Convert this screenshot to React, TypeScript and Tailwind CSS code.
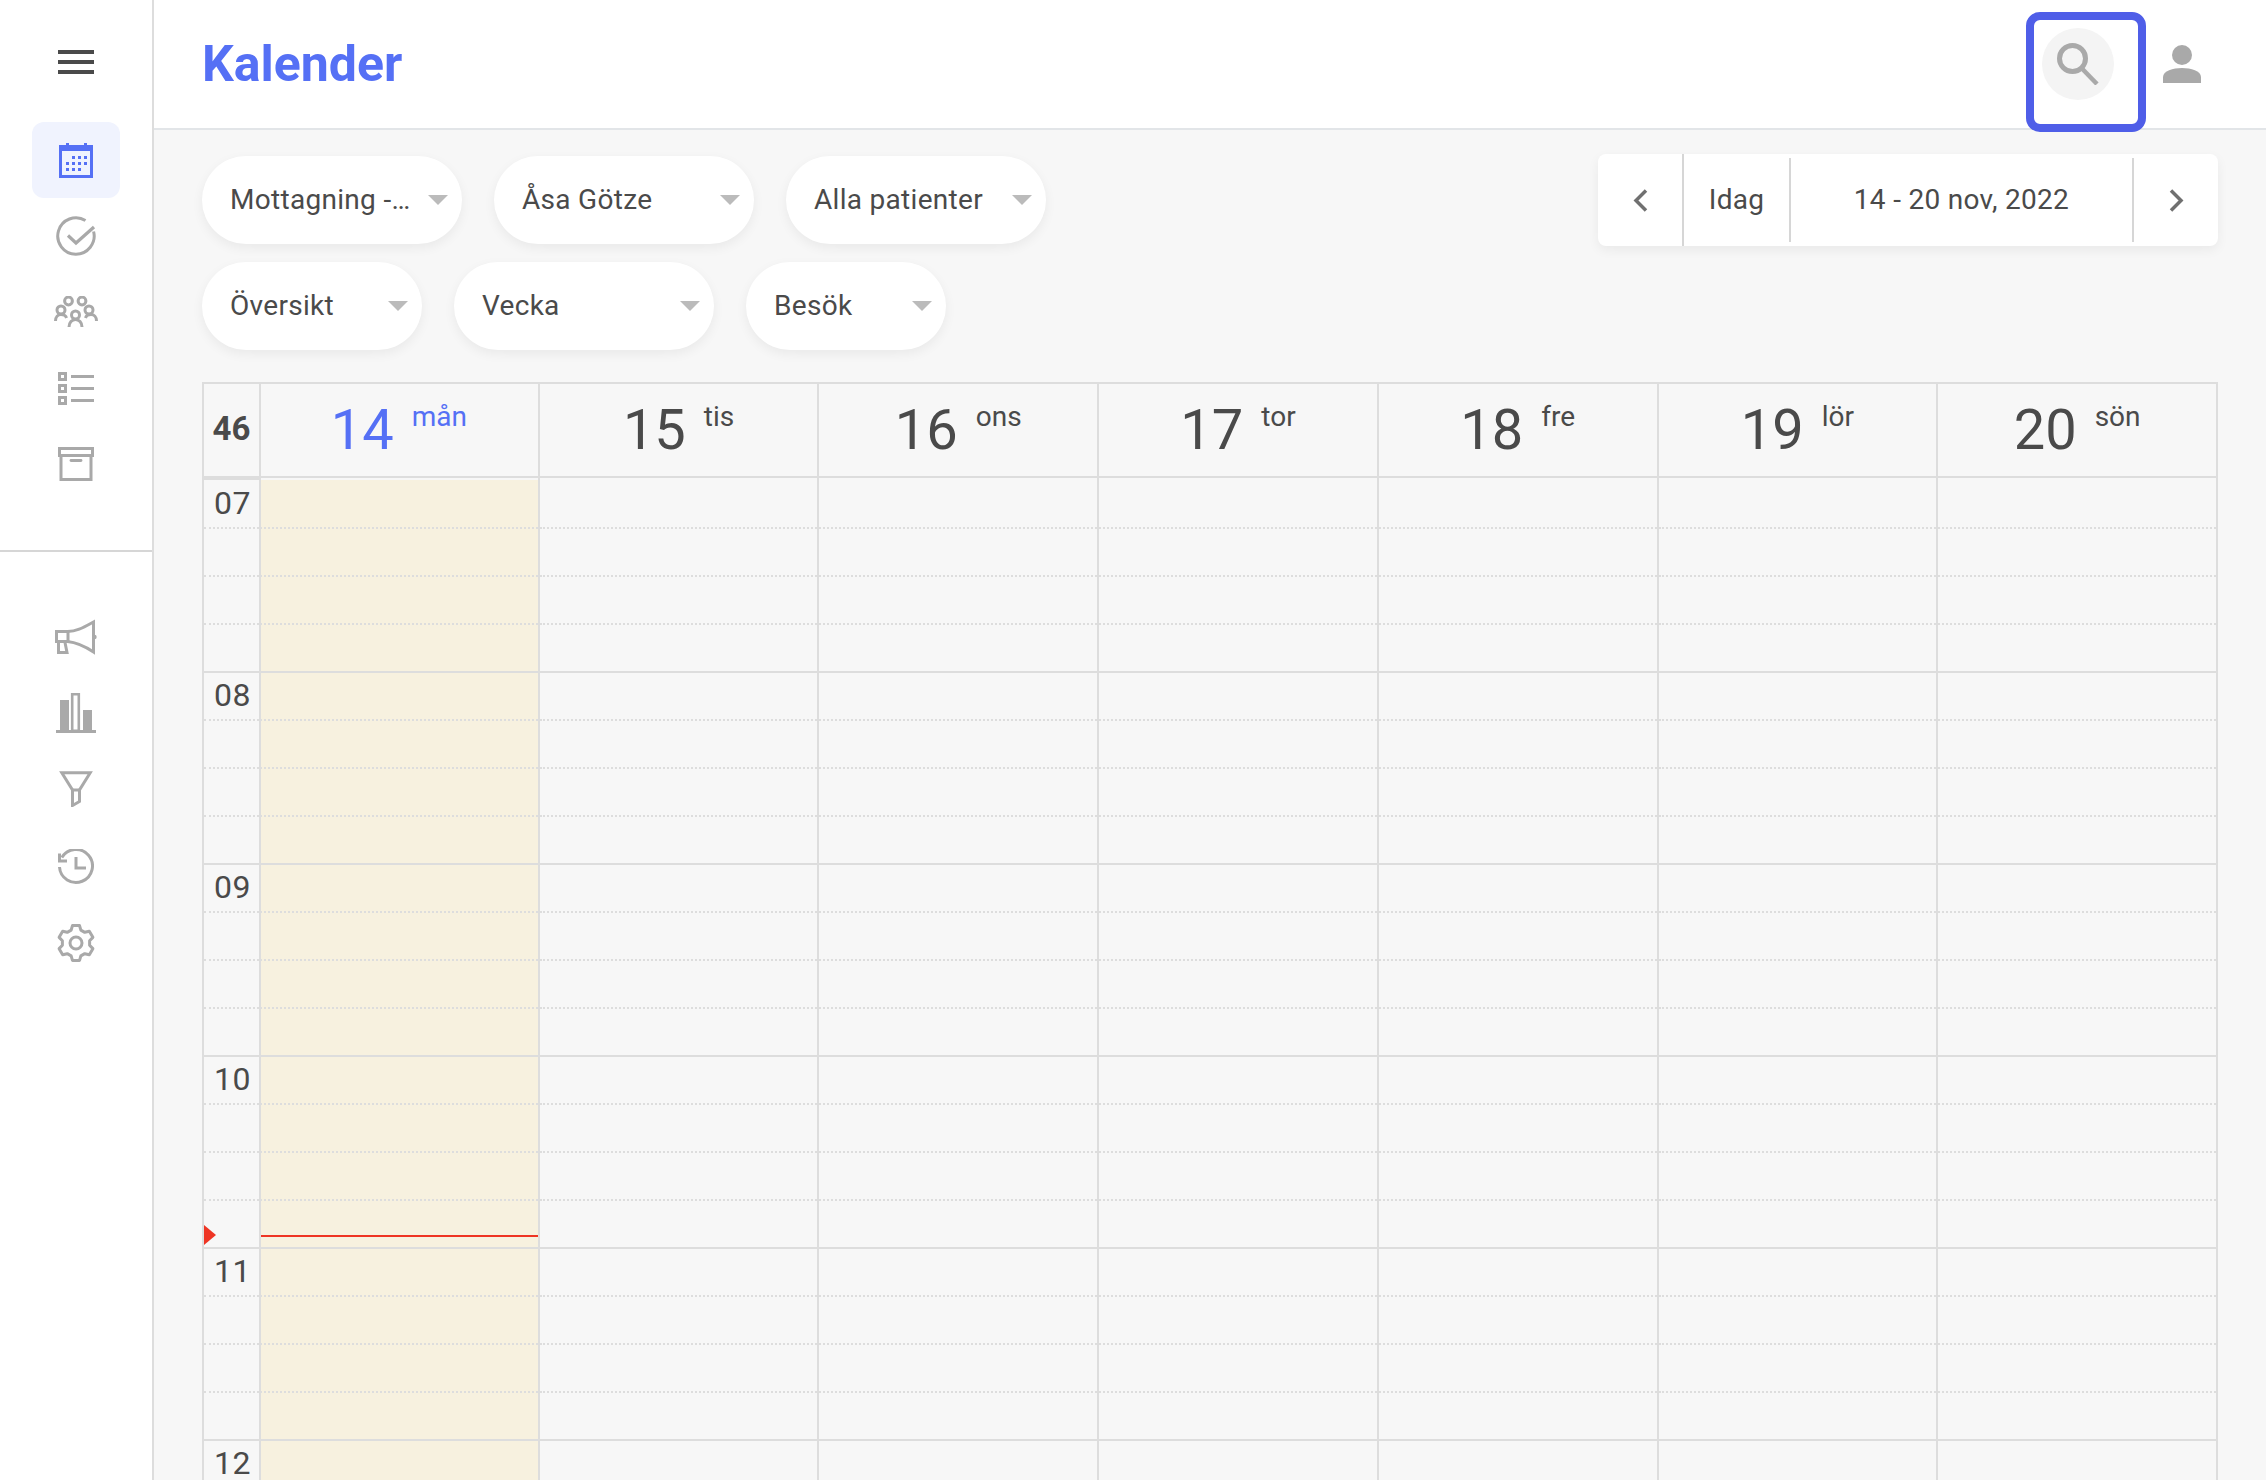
import React from "react";

const G = "#a9a9a9";
const INK = "#4a4a4a";

function gearPath(cx: number, cy: number) {
  const pts: string[] = [];
  const teeth = 6;
  for (let i = 0; i < teeth; i++) {
    const a = (i * 2 * Math.PI) / teeth - Math.PI / 2;
    const p = (r: number, d: number) => {
      const t = a + d;
      return `${(cx + r * Math.cos(t)).toFixed(2)} ${(cy + r * Math.sin(t)).toFixed(2)}`;
    };
    pts.push(p(13.8, -0.36), p(17.8, -0.2), p(17.8, 0.2), p(13.8, 0.36));
  }
  return "M" + pts.join("L") + "Z";
}

const Menu = () => (
  <svg width="36" height="24" viewBox="0 0 36 24"><path d="M0 2h36M0 12h36M0 22h36" stroke={INK} strokeWidth="3.8" /></svg>
);
const CalIcon = () => (
  <svg width="34" height="36" viewBox="0 0 34 36" fill="#5570f5">
    <path d="M1.5 4.5h31v30h-31z" fill="none" stroke="#5570f5" strokeWidth="3" />
    <rect x="1" y="4" width="32" height="5" />
    <rect x="7" y="1" width="3" height="6" /><rect x="25" y="1" width="3" height="6" />
    {[[13, 14], [19, 14], [25, 14], [7, 20], [13, 20], [19, 20], [25, 20], [7, 26], [13, 26], [19, 26]].map(([x, y]) => (
      <rect key={`${x}-${y}`} x={x} y={y} width="3" height="3" />
    ))}
  </svg>
);
const CheckIcon = () => (
  <svg width="40" height="40" viewBox="0 0 40 40" fill="none" stroke={G} strokeWidth="3">
    <path d="M37.6 15.5A18.2 18.2 0 1 1 29.5 4.5" />
    <path d="M12 19.5l8 7.5 18-16" strokeWidth="3.2" />
  </svg>
);
const PeopleIcon = () => (
  <svg width="44" height="32" viewBox="0 0 44 32" fill="none" stroke={G} strokeWidth="3">
    <circle cx="14.5" cy="5" r="3.9" /><circle cx="28" cy="5" r="3.9" />
    <circle cx="7" cy="14" r="4" /><circle cx="35" cy="14" r="4" /><circle cx="21.5" cy="19" r="4" />
    <path d="M1.5 25c0-4 2.5-6.5 5.5-6.5s5 1.8 5.5 3.5" />
    <path d="M42.5 25c0-4-2.5-6.5-5.5-6.5s-5 1.8-5.5 3.5" />
    <path d="M15 31c0-4.5 3-7.5 6.5-7.5s6.5 3 6.5 7.5" />
  </svg>
);
const ListIcon = () => (
  <svg width="36" height="34" viewBox="0 0 36 34" fill={G}>
    {[1, 13, 25].map((y) => (
      <g key={y}>
        <path fillRule="evenodd" d={`M0 ${y}h9v9h-9zM3 ${y + 3}v3h3v-3z`} />
        <rect x="13" y={y + 3} width="23" height="3" />
      </g>
    ))}
  </svg>
);
const ArchiveIcon = () => (
  <svg width="36" height="34" viewBox="0 0 36 34" fill="none" stroke={G} strokeWidth="3">
    <path d="M1.5 1.5h33v7h-33z" />
    <path d="M3 8v24.5h30V8" />
    <path d="M13 13.5h10" strokeLinecap="round" strokeWidth="2.8" />
  </svg>
);
const MegaIcon = () => (
  <svg width="42" height="36" viewBox="0 0 42 36" fill="none" stroke={G} strokeWidth="3" strokeLinejoin="miter">
    <path d="M1.5 12.5h11c9 0 15-3.5 26-9.500v30c-9-6-16-9.500-26-10.500h-11z" />
    <path d="M13 12.5v11" />
    <path d="M3.5 23v10.500h8.500l-2-10" />
    <circle cx="39.5" cy="18" r="2.2" fill={G} stroke="none" />
  </svg>
);
const ChartIcon = () => (
  <svg width="40" height="40" viewBox="0 0 40 40" fill={G}>
    <rect x="4" y="7" width="9" height="31" />
    <path d="M16.2 1.3h6.6v36.500h-6.600z" fill="none" stroke={G} strokeWidth="2.6" />
    <rect x="27" y="17" width="9" height="21" />
    <rect x="0" y="37" width="40" height="3" />
  </svg>
);
const FunnelIcon = () => (
  <svg width="34" height="36" viewBox="0 0 34 36" fill="none" stroke={G} strokeWidth="3">
    <path d="M2.8 1.8h28.4L20.500 19v11.500l-7 4V19z" />
    <path d="M13.5 19h7" />
  </svg>
);
const HistoryIcon = () => (
  <svg width="36" height="36" viewBox="0 0 36 36" fill="none" stroke={G} strokeWidth="3">
    <path d="M3.8 8.500A16.500 16.500 0 1 1 1.500 18" />
    <path d="M1.5 4.500v7.500h7.500" />
    <path d="M18 8v11h10" />
  </svg>
);
const GearIcon = () => (
  <svg width="40" height="40" viewBox="0 0 40 40" fill="none" stroke={G} strokeWidth="3" strokeLinejoin="round">
    <path d={gearPath(20, 20)} />
    <circle cx="20" cy="20" r="6" />
  </svg>
);
const SearchIcon = () => (
  <svg width="42" height="42" viewBox="0 0 42 42" fill="none" stroke={G} strokeWidth="5">
    <circle cx="15.5" cy="15.5" r="13" />
    <path d="M24 24.500L40 41" strokeWidth="4.5" />
  </svg>
);
const UserIcon = () => (
  <svg width="38" height="38" viewBox="0 0 38 38" fill={G}>
    <circle cx="19" cy="10" r="10" />
    <path d="M0 38v-6c0-6 10-9 19-9s19 3 19 9v6z" />
  </svg>
);
const Caret = () => (
  <svg width="20" height="10" viewBox="0 0 20 10" className="shrink-0"><path d="M0 0h20L10 10z" fill="#bbbbbb" /></svg>
);

const NavItem = ({ children, active }: { children: React.ReactNode; active?: boolean }) => (
  <div className={`flex h-[76px] items-center justify-center mx-[32px] rounded-xl ${active ? "bg-[#f0f3fe]" : ""}`}>{children}</div>
);

const Pill = ({ label, w }: { label: string; w: string }) => (
  <div className={`flex h-[88px] items-center justify-between rounded-full bg-white pl-[28px] pr-[14px] text-[28px] tracking-[0.3px] text-[#4a4a4a] shadow-[0_4px_12px_rgba(0,0,0,0.06)] ${w}`}>
    <span>{label}</span>
    <Caret />
  </div>
);

const days = [
  ["14", "mån"],
  ["15", "tis"],
  ["16", "ons"],
  ["17", "tor"],
  ["18", "fre"],
  ["19", "lör"],
  ["20", "sön"],
];
const hours = ["07", "08", "09", "10", "11", "12"];

const Hour = ({ i, label }: { i: number; label?: string }) => (
  <div>
    {[0, 1, 2, 3].map((q) => (
      <div
        key={q}
        className={`border-b-2 border-[#dddddd] ${q === 3 ? "border-solid" : "border-dotted"} ${i === 0 && q === 0 ? "h-[49px]" : "h-12"}`}
      >
        {q === 0 && label ? (
          <div className={`pr-[8px] text-right text-[32px] leading-[30px] tracking-[0.5px] text-[#4a4a4a] ${i === 0 ? "pt-[8px]" : "pt-[7px]"}`}>{label}</div>
        ) : null}
      </div>
    ))}
  </div>
);

export default function App() {
  return (
    <div className="flex h-[1480px] w-[2266px] overflow-hidden bg-[#f7f7f7] font-['Roboto',sans-serif]">
      <aside className="h-full w-[154px] shrink-0 border-r-2 border-[#dddddd] bg-white">
        <div className="flex h-[122px] items-center justify-center pt-px"><Menu /></div>
        <NavItem active><CalIcon /></NavItem>
        <NavItem><CheckIcon /></NavItem>
        <NavItem><PeopleIcon /></NavItem>
        <NavItem><ListIcon /></NavItem>
        <NavItem><ArchiveIcon /></NavItem>
        <div className="mt-[48px] h-[2px] bg-[#d6d6d6]" />
        <div className="mt-[47px]">
          <NavItem><MegaIcon /></NavItem>
          <NavItem><ChartIcon /></NavItem>
          <NavItem><FunnelIcon /></NavItem>
          <div className="pt-[2px]">
            <NavItem><HistoryIcon /></NavItem>
            <NavItem><GearIcon /></NavItem>
          </div>
        </div>
      </aside>
      <div className="min-w-0 flex-1">
        <header className="flex h-[130px] items-center justify-between border-b-2 border-[#e2e5e8] bg-white pl-[48px] pr-[65px]">
          <h1 className="text-[50px] font-bold leading-none text-[#5570f5]">Kalender</h1>
          <div className="flex items-center gap-[49px]">
            <div className="relative flex h-[72px] w-[72px] items-center justify-center rounded-full bg-[#f4f4f4]">
              <SearchIcon />
              <div className="absolute left-[-16px] top-[-16px] h-[120px] w-[120px] rounded-[14px] border-8 border-[#4f5ee8]" />
            </div>
            <UserIcon />
          </div>
        </header>
        <div className="px-[48px]">
          <div className="flex items-start justify-between pt-[26px]">
            <div className="flex flex-col gap-[18px]">
              <div className="flex gap-[32px]">
                <Pill label="Mottagning -…" w="w-[260px]" />
                <Pill label="Åsa Götze" w="w-[260px]" />
                <Pill label="Alla patienter" w="w-[260px]" />
              </div>
              <div className="flex gap-[32px]">
                <Pill label="Översikt" w="w-[220px]" />
                <Pill label="Vecka" w="w-[260px]" />
                <Pill label="Besök" w="w-[200px]" />
              </div>
            </div>
            <div className="-mt-[2px] flex h-[92px] w-[620px] items-stretch rounded-lg bg-white text-[28px] tracking-[0.3px] text-[#4a4a4a] shadow-[0_4px_12px_rgba(0,0,0,0.06)]">
              <div className="flex w-[86px] items-center justify-center border-r-2 border-[#d6d6d6]">
                <svg width="15" height="23" viewBox="0 0 15 23" fill="none" stroke="#707070" strokeWidth="3.5"><path d="M13 1.5L3 11.5l10 10" /></svg>
              </div>
              <div className="my-1 flex w-[107px] items-center justify-center border-r-2 border-[#d6d6d6]">Idag</div>
              <div className="my-1 flex w-[343px] items-center justify-center border-r-2 border-[#d6d6d6]">14 - 20 nov, 2022</div>
              <div className="flex flex-1 items-center justify-center">
                <svg width="15" height="23" viewBox="0 0 15 23" fill="none" stroke="#707070" strokeWidth="3.5"><path d="M2 1.5L12 11.5 2 21.5" /></svg>
              </div>
            </div>
          </div>
          <div className="mt-[32px] border-l-2 border-t-2 border-[#dddddd]">
            <div className="grid h-[94px] grid-cols-[56px_repeat(7,1fr)] border-b-2 border-[#dddddd]">
              <div className="relative z-10 mr-[-1px] flex items-center justify-center border-r-2 border-[#dddddd] pb-[2px] text-[33px] font-bold text-[#4a4a4a]">46</div>
              {days.map(([n, d], i) => (
                <div key={n} className={`flex justify-center gap-[18px] border-r-2 border-[#dddddd] ${i === 0 ? "text-[#5570f5]" : "text-[#4a4a4a]"}`}>
                  <span className="text-[56px] leading-[92px]">{n}</span>
                  <span className="pt-[15px] text-[28px] leading-[36px]">{d}</span>
                </div>
              ))}
            </div>
            <div className="grid grid-cols-[56px_repeat(7,1fr)]">
              <div className="relative z-10 mr-[-1px] border-r-2 border-t-2 border-[#dddddd]">
                {hours.map((h, i) => <Hour key={h} i={i} label={h} />)}
                <svg width="12" height="20" viewBox="0 0 12 20" className="absolute left-0 top-[745px]"><path d="M0 0l12 10L0 20z" fill="#ee3524" /></svg>
              </div>
              {days.map(([n], c) => (
                <div key={n} className={`relative border-r-2 border-[#dddddd] ${c === 0 ? "bg-[#f7f1df]" : ""}`}>
                  <div className="h-[2px] bg-[#f7f7f7]" />
                  {hours.map((h, i) => <Hour key={h} i={i} />)}
                  {c === 0 ? <div className="absolute left-[1px] right-0 top-[757px] h-[2px] bg-[#ee3524]" /> : null}
                </div>
              ))}
            </div>
          </div>
        </div>
      </div>
    </div>
  );
}
